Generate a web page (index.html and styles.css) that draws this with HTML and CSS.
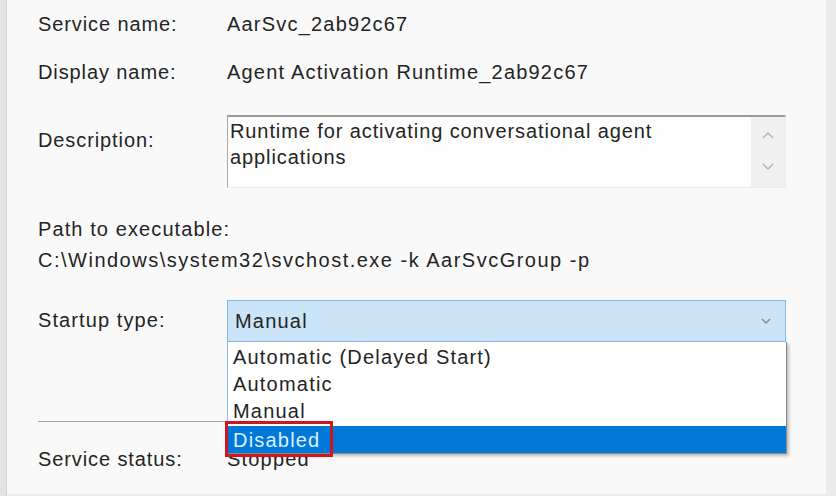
FILE: index.html
```html
<!DOCTYPE html>
<html lang="en">
<head>
  <meta charset="UTF-8">
  <title>Service Properties</title>
  <link rel="stylesheet" href="styles.css">
</head>
<body>
  <div class="edge-left"></div>

  <section class="panel">
    <div class="row row-name">
      <div class="label">Service name:</div>
      <div class="value">AarSvc_2ab92c67</div>
    </div>
    <div class="row row-display">
      <div class="label">Display name:</div>
      <div class="value">Agent Activation Runtime_2ab92c67</div>
    </div>
    <div class="row row-desc">
      <div class="label">Description:</div>
      <div class="textbox">
        <div class="textbox-text">Runtime for activating conversational agent applications</div>
        <div class="scrollbar">
          <svg width="12" height="8" viewBox="0 0 12 8"><path d="M1 7 L6 2 L11 7" fill="none" stroke="#b4b4b4" stroke-width="1.5"/></svg>
          <svg width="12" height="8" viewBox="0 0 12 8"><path d="M1 1 L6 6 L11 1" fill="none" stroke="#b4b4b4" stroke-width="1.5"/></svg>
        </div>
      </div>
    </div>

    <div class="path-label">Path to executable:</div>
    <div class="path-value">C:\Windows\system32\svchost.exe -k AarSvcGroup -p</div>

    <div class="row row-startup">
      <div class="label">Startup type:</div>
      <div class="combo-wrap">
        <div class="combo">
          <span>Manual</span>
          <svg width="10" height="6" viewBox="0 0 10 6"><path d="M1 1 L5 5 L9 1" fill="none" stroke="#7a8a99" stroke-width="1.4"/></svg>
        </div>
        <ul class="dropdown">
          <li>Automatic (Delayed Start)</li>
          <li>Automatic</li>
          <li>Manual</li>
          <li class="selected">Disabled<span class="highlight"></span></li>
        </ul>
      </div>
    </div>

    <hr class="separator">

    <div class="row row-status">
      <div class="label">Service status:</div>
      <div class="value">Stopped</div>
    </div>
  </section>

  <div class="edge-right"></div>
</body>
</html>
```

FILE: styles.css
```css
body {
  margin: 0;
  height: 496px;
  display: flex;
  background: #f9f9f9;
  font-family: "Liberation Sans", Arial, sans-serif;
  font-size: 20px;
  letter-spacing: 1.2px;
  color: #242424;
  overflow: hidden;
}
.edge-left {
  width: 6px;
  background: #e4e4e4;
  border-right: 1px solid #d4d4d4;
}
.edge-right {
  width: 10px;
  background: #ebebeb;
}
.panel {
  flex: 1;
  padding: 11px 0 0 31px;
  position: relative;
  border-bottom: 2px solid #ececec;
}
.row {
  display: flex;
  line-height: 26px;
}
.label {
  width: 189px;
  flex: none;
  letter-spacing: 0.9px;
}
.row-display {
  margin-top: 22px;
}
.row-desc {
  margin-top: 30px;
}
.row-desc .label {
  padding-top: 12px;
}
.textbox {
  width: 557px;
  height: 70px;
  display: flex;
  background: #fdfdfd;
  border-top: 2px solid #9c9c9c;
  border-left: 1px solid #a9a9a9;
  border-right: 1px solid #ececec;
  border-bottom: 1px solid #ececec;
}
.textbox-text {
  flex: 1;
  padding: 1px 0 0 2px;
  letter-spacing: 0.9px;
}
.scrollbar {
  width: 34px;
  background: #f0f0f0;
  display: flex;
  flex-direction: column;
  align-items: center;
  justify-content: space-between;
  padding: 14px 0 16px;
}
.path-label {
  margin-top: 28px;
  line-height: 26px;
  letter-spacing: 1.1px;
}
.path-value {
  margin-top: 5px;
  line-height: 26px;
  letter-spacing: 1.5px;
}
.row-startup {
  margin-top: 27px;
}
.row-startup .label {
  padding-top: 7px;
  letter-spacing: 1.1px;
}
.combo-wrap {
  position: relative;
}
.combo {
  width: 559px;
  height: 42px;
  box-sizing: border-box;
  padding: 0 14px 0 7px;
  display: flex;
  align-items: center;
  justify-content: space-between;
  background: #cce4f7;
  border: 1px solid #86b8e6;
}
.dropdown {
  position: absolute;
  left: 0;
  top: 42px;
  z-index: 2;
  width: 558px;
  margin: 0;
  padding: 2px 0 0;
  list-style: none;
  background: #ffffff;
  border-left: 1px solid #8fbde8;
  border-right: 1px solid #8a8a8a;
  border-bottom: 1px solid #8a8a8a;
  box-shadow: 2px 2px 3px rgba(0, 0, 0, 0.25);
}
.dropdown li {
  height: 27px;
  line-height: 27px;
  padding-left: 5px;
}
.dropdown li.selected {
  position: relative;
  margin-top: 1px;
  line-height: 28px;
  background: #0078d7;
  color: #dcefff;
}
.highlight {
  position: absolute;
  left: -3px;
  top: -5px;
  width: 102px;
  height: 30px;
  border: 3px solid #d0151f;
}
.separator {
  margin: 79px 0 0;
  width: 748px;
  border: none;
  border-top: 1px solid #a3a3a3;
}
.row-status {
  margin-top: 24px;
}
```
